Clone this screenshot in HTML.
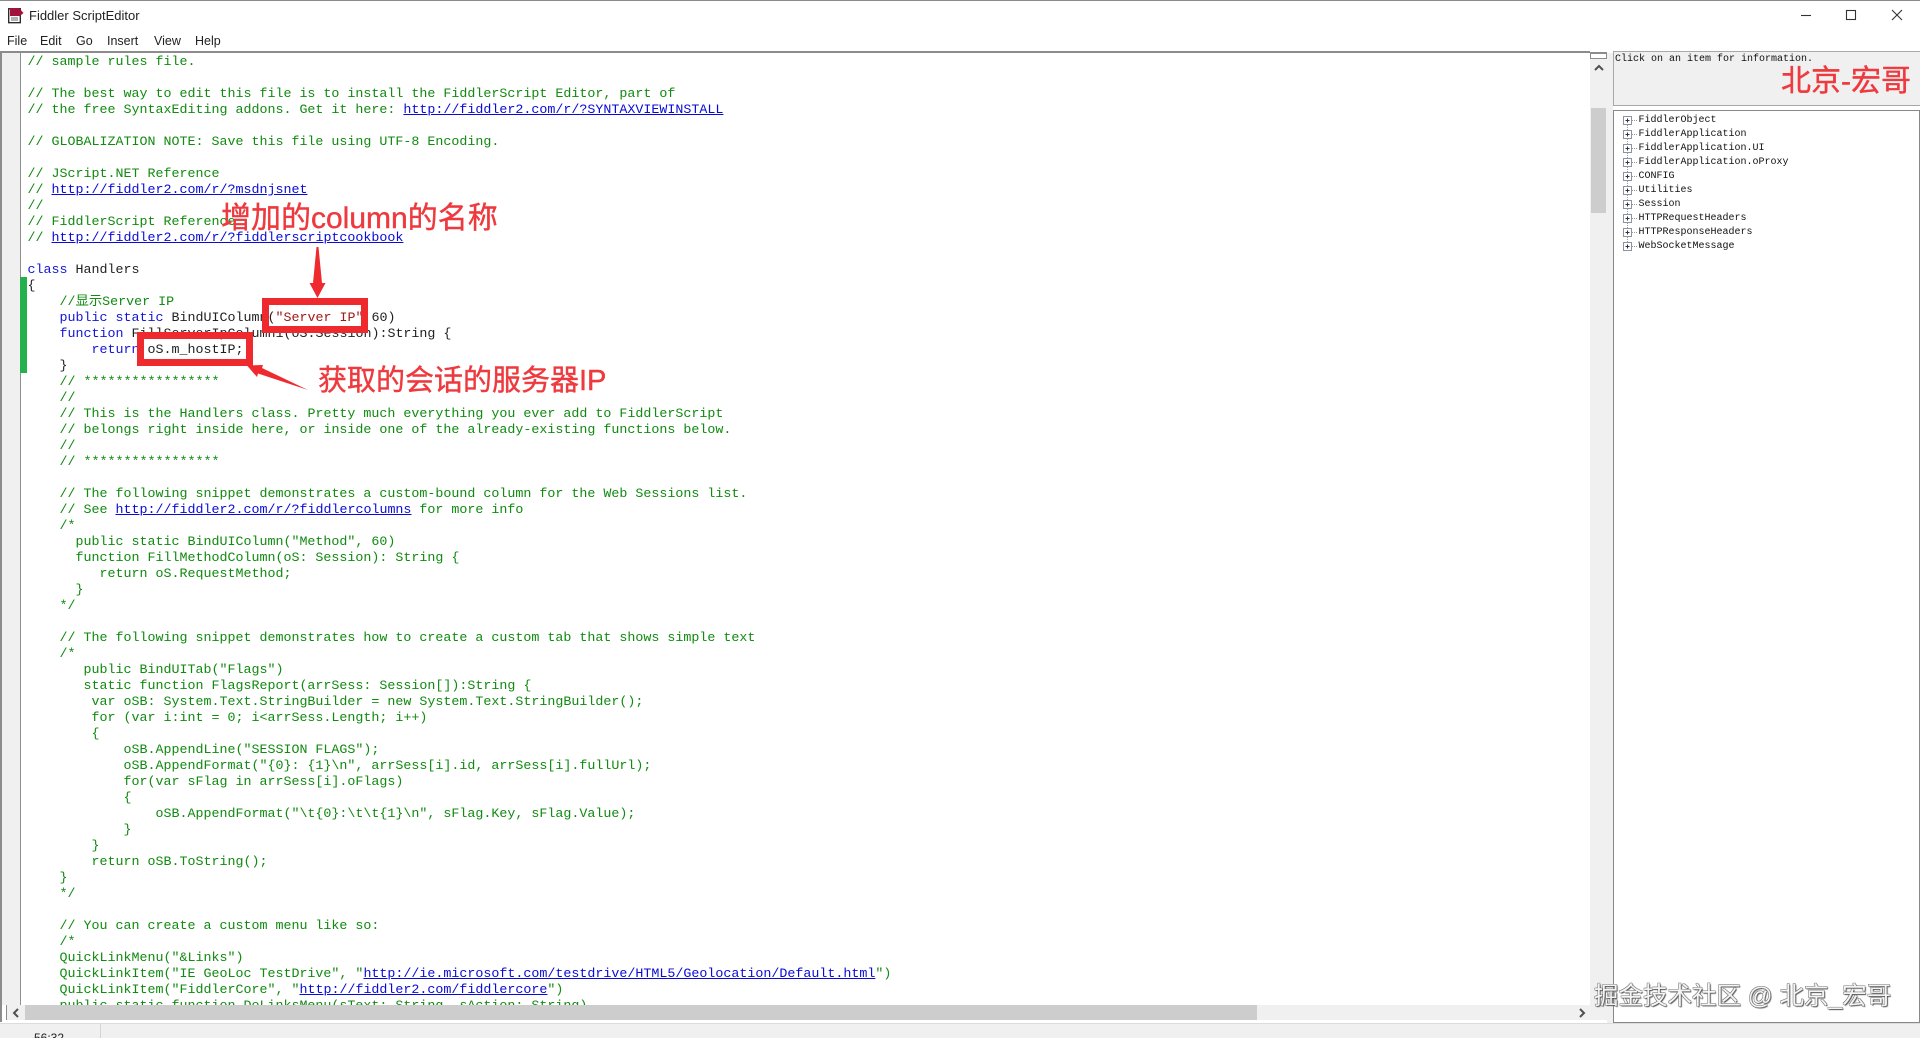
<!DOCTYPE html>
<html><head><meta charset="utf-8"><style>
html,body{margin:0;padding:0;background:#fff;width:1920px;height:1038px;overflow:hidden}
body{position:relative;font-family:"Liberation Sans","Noto Sans CJK SC",sans-serif}
.a{position:absolute}
#clip{position:absolute;left:27.5px;top:53px;width:1562px;height:952px;overflow:hidden}
#code{position:absolute;left:0;top:2px;margin:0;font:13.33px/16px "Liberation Mono","Noto Sans CJK SC",monospace;color:#1f1f1f;white-space:pre}
.c{color:#108a10}.k{color:#1414d8}.s{color:#a01818}
.l{color:#0a0ad8;text-decoration:underline}
.m{position:absolute;top:33px;font-size:12.5px;line-height:16px;color:#222}
.box{position:absolute;border:7px solid #ee2a2e;box-sizing:border-box}
.red{position:absolute;color:#ee3a3e;font-family:"Liberation Sans","Noto Sans CJK SC",sans-serif;white-space:nowrap;line-height:1;-webkit-text-stroke:0.4px #ee3a3e}
.t{position:absolute;left:1638.5px;font:10px/14px "Liberation Mono",monospace;color:#111;white-space:pre}
</style></head><body>
<div class="a" style="left:0;top:0;width:1920px;height:1px;background:#8a8a8a"></div>

<svg class="a" style="left:7px;top:6px" width="18" height="18" viewBox="0 0 18 18"><rect x="1.7" y="2.7" width="11.6" height="14" fill="#fff" stroke="#222" stroke-width="1.3"/><path d="M4 12h7M4 14h7" stroke="#666"/><path d="M3 2h9l4.5 5-3.5 3H3z" fill="#a3143c"/></svg>
<div class="a" style="left:29px;top:7px;font-size:13px;line-height:17px;color:#222">Fiddler ScriptEditor</div>
<div class="m" style="left:7px">File</div><div class="m" style="left:40px">Edit</div><div class="m" style="left:76px">Go</div><div class="m" style="left:107px">Insert</div><div class="m" style="left:154px">View</div><div class="m" style="left:195px">Help</div>

<svg class="a" style="left:1795px;top:5px" width="115" height="20" viewBox="0 0 115 20" fill="none" stroke="#333" stroke-width="1.1"><path d="M6 10.5h10"/><rect x="51.5" y="5.5" width="9" height="9"/><path d="M97 5l10 10M107 5L97 15"/></svg>

<!-- editor frame -->
<div class="a" style="left:0;top:51px;width:1590px;height:2px;background:#8c8c8c"></div>
<div class="a" style="left:0;top:52px;width:2px;height:970px;background:#8c8c8c"></div>
<div class="a" style="left:2px;top:53px;width:18px;height:952px;background:#f0f0f0"></div>
<div class="a" style="left:20px;top:53px;width:1px;height:952px;background:#8f8f8f"></div>
<div class="a" style="left:20px;top:277px;width:7px;height:96px;background:#22b14c"></div>

<div id="clip"><pre id="code"><span class="c">// sample rules file.</span>

<span class="c">// The best way to edit this file is to install the FiddlerScript Editor, part of</span>
<span class="c">// the free SyntaxEditing addons. Get it here: </span><span class="l">http://fiddler2.com/r/?SYNTAXVIEWINSTALL</span>

<span class="c">// GLOBALIZATION NOTE: Save this file using UTF-8 Encoding.</span>

<span class="c">// JScript.NET Reference</span>
<span class="c">// </span><span class="l">http://fiddler2.com/r/?msdnjsnet</span>
<span class="c">//</span>
<span class="c">// FiddlerScript Reference</span>
<span class="c">// </span><span class="l">http://fiddler2.com/r/?fiddlerscriptcookbook</span>

<span class="k">class</span> Handlers
{
    <span class="c">//显示Server IP</span>
    <span class="k">public</span> <span class="k">static</span> BindUIColumn(<span class="s">"Server IP"</span>,60)
    <span class="k">function</span> FillServerIpColumn1(oS:Session):String {
        <span class="k">return</span> oS.m_hostIP;
    }
    <span class="c">// *****************</span>
    <span class="c">//</span>
    <span class="c">// This is the Handlers class. Pretty much everything you ever add to FiddlerScript</span>
    <span class="c">// belongs right inside here, or inside one of the already-existing functions below.</span>
    <span class="c">//</span>
    <span class="c">// *****************</span>

    <span class="c">// The following snippet demonstrates a custom-bound column for the Web Sessions list.</span>
    <span class="c">// See </span><span class="l">http://fiddler2.com/r/?fiddlercolumns</span><span class="c"> for more info</span>
    <span class="c">/*</span>
<span class="c">      public static BindUIColumn("Method", 60)
      function FillMethodColumn(oS: Session): String {
         return oS.RequestMethod;
      }
    */

    // The following snippet demonstrates how to create a custom tab that shows simple text
    /*
       public BindUITab("Flags")
       static function FlagsReport(arrSess: Session[]):String {
        var oSB: System.Text.StringBuilder = new System.Text.StringBuilder();
        for (var i:int = 0; i&lt;arrSess.Length; i++)
        {
            oSB.AppendLine("SESSION FLAGS");
            oSB.AppendFormat("{0}: {1}\n", arrSess[i].id, arrSess[i].fullUrl);
            for(var sFlag in arrSess[i].oFlags)
            {
                oSB.AppendFormat("\t{0}:\t\t{1}\n", sFlag.Key, sFlag.Value);
            }
        }
        return oSB.ToString();
    }
    */

    // You can create a custom menu like so:
    /*
    QuickLinkMenu("&amp;Links")
    QuickLinkItem("IE GeoLoc TestDrive", "</span><span class="l">http://ie.microsoft.com/testdrive/HTML5/Geolocation/Default.html</span><span class="c">")
    QuickLinkItem("FiddlerCore", "</span><span class="l">http://fiddler2.com/fiddlercore</span><span class="c">")
    public static function DoLinksMenu(sText: String, sAction: String)</span></pre></div>

<!-- vertical scrollbar -->
<div class="a" style="left:1590px;top:53px;width:17px;height:952px;background:#f0f0f0"></div>
<div class="a" style="left:1590px;top:52px;width:17px;height:7px;background:#fff;border:1px solid #8c8c8c;border-top-width:2px;box-sizing:border-box"></div>
<svg class="a" style="left:1593px;top:63px" width="12" height="10" viewBox="0 0 12 10" fill="none" stroke="#505050" stroke-width="2"><path d="M2 7l4-4 4 4"/></svg>
<div class="a" style="left:1591px;top:108px;width:15px;height:105px;background:#cdcdcd"></div>
<div class="a" style="left:1607px;top:53px;width:6px;height:970px;background:#f0f0f0"></div>

<!-- horizontal scrollbar -->
<div class="a" style="left:2px;top:1005px;width:1605px;height:15px;background:#f0f0f0"></div>
<div class="a" style="left:2px;top:1005px;width:5px;height:15px;background:#fff;border-right:1px solid #8c8c8c;box-sizing:border-box"></div>
<svg class="a" style="left:11px;top:1008px" width="10" height="10" viewBox="0 0 10 10" fill="none" stroke="#505050" stroke-width="2"><path d="M7 1L3 5l4 4"/></svg>
<div class="a" style="left:25px;top:1005px;width:1232px;height:15px;background:#cdcdcd"></div>
<svg class="a" style="left:1577px;top:1008px" width="10" height="10" viewBox="0 0 10 10" fill="none" stroke="#505050" stroke-width="2"><path d="M3 1l4 4-4 4"/></svg>

<!-- info box -->
<div class="a" style="left:1613px;top:51px;width:307px;height:55px;background:#f0f0f0;border:1px solid #a8a8a8;border-right:0;box-sizing:border-box"></div>
<div class="a" style="left:1615px;top:52px;font:10px/15px 'Liberation Mono',monospace;color:#111">Click on an item for information.</div>
<div class="red" style="left:1781px;top:67px;font-size:30px">北京-宏哥</div>

<!-- tree -->
<div class="a" style="left:1613px;top:110px;width:307px;height:913px;background:#fff;border:1px solid #888;box-sizing:border-box"></div>
<svg class="a" style="left:1620px;top:113px" width="20" height="140" viewBox="0 0 20 140">
<path d="M7.5 8V130" stroke="#999" stroke-dasharray="1 1"/>
<g id="p"><rect x="3.5" y="3.5" width="8" height="8" fill="#fff" stroke="#8a94a6"/><path d="M5.5 7.5h4M7.5 5.5v4" stroke="#333"/><path d="M12 7.5h5" stroke="#999" stroke-dasharray="1 1"/></g>
<use href="#p" y="14"/><use href="#p" y="28"/><use href="#p" y="42"/><use href="#p" y="56"/><use href="#p" y="70"/><use href="#p" y="84"/><use href="#p" y="98"/><use href="#p" y="112"/><use href="#p" y="126"/>
</svg>
<div class="t" style="top:114px">FiddlerObject</div>
<div class="t" style="top:128px">FiddlerApplication</div>
<div class="t" style="top:142px">FiddlerApplication.UI</div>
<div class="t" style="top:156px">FiddlerApplication.oProxy</div>
<div class="t" style="top:170px">CONFIG</div>
<div class="t" style="top:184px">Utilities</div>
<div class="t" style="top:198px">Session</div>
<div class="t" style="top:212px">HTTPRequestHeaders</div>
<div class="t" style="top:226px">HTTPResponseHeaders</div>
<div class="t" style="top:240px">WebSocketMessage</div>

<!-- status -->
<div class="a" style="left:0;top:1023px;width:1920px;height:15px;background:#f0f0f0;border-top:1px solid #dcdcdc;box-sizing:border-box"></div>
<div class="a" style="left:100px;top:1024px;width:1px;height:14px;background:#d4d4d4"></div>
<div class="a" style="left:34px;top:1031px;font-size:12px;line-height:14px;color:#222">56:32</div>

<!-- annotations -->
<div class="box" style="left:262px;top:298px;width:106px;height:35px"></div>
<div class="box" style="left:137px;top:332px;width:116px;height:34px"></div>
<svg class="a" style="left:0;top:0" width="1920" height="1038" viewBox="0 0 1920 1038" fill="#ee2a2e">
<path d="M316.5 247h2l3.5 36h3.500l-8 15-8-15h3.500z"/>
<path d="M247 365.500l16-.5-1 3 46 22-50-16.500-1 3.500z"/>
</svg>
<div class="red" style="left:221px;top:204px;font-size:30px">增加的column的名称</div>
<div class="red" style="left:318px;top:367px;font-size:29px">获取的会话的服务器IP</div>

<div class="a" style="left:1594px;top:984px;font-size:24.5px;line-height:26px;white-space:nowrap;color:#f4f4f4;text-shadow:1px 1px 1px #555,-0.5px -0.5px 0 #777,0.5px -0.5px 0 #888,-0.5px 0.5px 0 #888">掘金技术社区 @ 北京_宏哥</div>
</body></html>
